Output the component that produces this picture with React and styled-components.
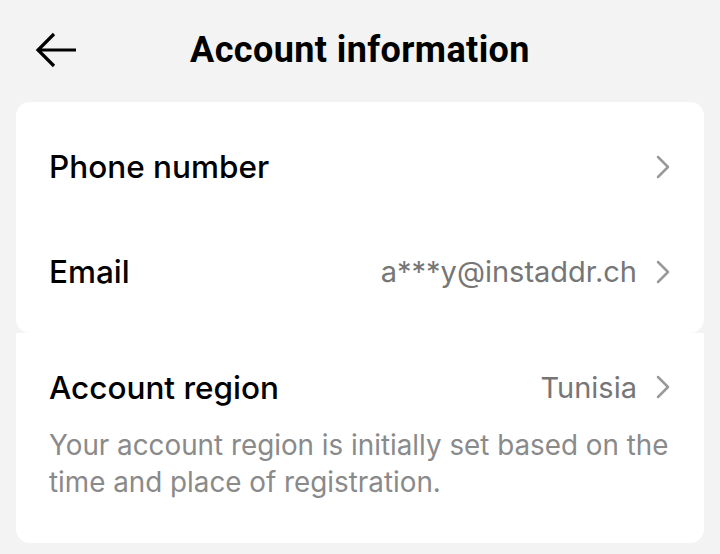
import React from "react";
import styled, { createGlobalStyle } from "styled-components";

const Global = createGlobalStyle`
  html, body { margin: 0; padding: 0; background: #f3f3f3; }
  body { font-family: Inter, "Noto Sans", sans-serif; -webkit-font-smoothing: antialiased; }
`;

const Page = styled.div`
  width: 720px;
  height: 554px;
  background: #f3f3f3;
  box-sizing: border-box;
  padding: 0 16px;
  display: flex;
  flex-direction: column;
  overflow: hidden;
`;

const Header = styled.header`
  position: relative;
  height: 102px;
  display: flex;
  align-items: center;
  justify-content: center;
`;

const BackButton = styled.button`
  position: absolute;
  left: 18px;
  top: 31px;
  width: 44px;
  height: 38px;
  padding: 0;
  border: none;
  background: none;
  display: flex;
  align-items: center;
  justify-content: center;
`;

const Title = styled.h1`
  margin: 0;
  margin-top: -3px;
  font-family: Roboto, "Liberation Sans", sans-serif;
  font-weight: 700;
  font-size: 36px;
  letter-spacing: 0.4px;
  color: #000;
`;

const Card = styled.section`
  background: #fff;
  border-radius: ${(p) => p.$radius};
  padding: ${(p) => p.$pad};
  display: flex;
  flex-direction: column;
`;

const Row = styled.div`
  height: ${(p) => p.$h}px;
  padding: 0 34px 0 33px;
  display: flex;
  align-items: center;
  justify-content: space-between;
`;

const Label = styled.span`
  font-size: 31.5px;
  font-weight: 500;
  color: #000;
`;

const Trail = styled.span`
  display: flex;
  align-items: center;
  gap: 19px;
`;

const Value = styled.span`
  font-size: 29px;
  font-weight: 400;
  color: #767676;
`;

const Note = styled.p`
  margin: 0;
  padding: 0 20px 0 33px;
  font-size: 27.8px;
  line-height: 37px;
  font-weight: 400;
  color: #8a8a8a;
`;

const Chevron = () => (
  <svg width="14" height="24" viewBox="0 0 14 24" fill="none">
    <path d="M2 2 L12 12 L2 22" stroke="#999" strokeWidth="2.5" strokeLinecap="round" strokeLinejoin="round" />
  </svg>
);

const ArrowLeft = () => (
  <svg width="44" height="38" viewBox="0 0 44 38" fill="none">
    <path d="M20 3 L4 19 L20 35 M4 19 L42 19" stroke="#000" strokeWidth="3.2" strokeLinecap="butt" strokeLinejoin="miter" />
  </svg>
);

export default function App() {
  return (
    <>
      <Global />
      <Page>
        <Header>
          <BackButton aria-label="Back"><ArrowLeft /></BackButton>
          <Title>Account information</Title>
        </Header>
        <Card $radius="14px" $pad="12px 0 9px">
          <Row $h={105}>
            <Label>Phone number</Label>
            <Trail><Chevron /></Trail>
          </Row>
          <Row $h={105}>
            <Label>Email</Label>
            <Trail>
              <Value>a***y@instaddr.ch</Value>
              <Chevron />
            </Trail>
          </Row>
        </Card>
        <Card $radius="0 0 14px 14px" $pad="14px 0 42px">
          <Row $h={80}>
            <Label>Account region</Label>
            <Trail>
              <Value>Tunisia</Value>
              <Chevron />
            </Trail>
          </Row>
          <Note>Your account region is initially set based on the time and place of registration.</Note>
        </Card>
      </Page>
    </>
  );
}
